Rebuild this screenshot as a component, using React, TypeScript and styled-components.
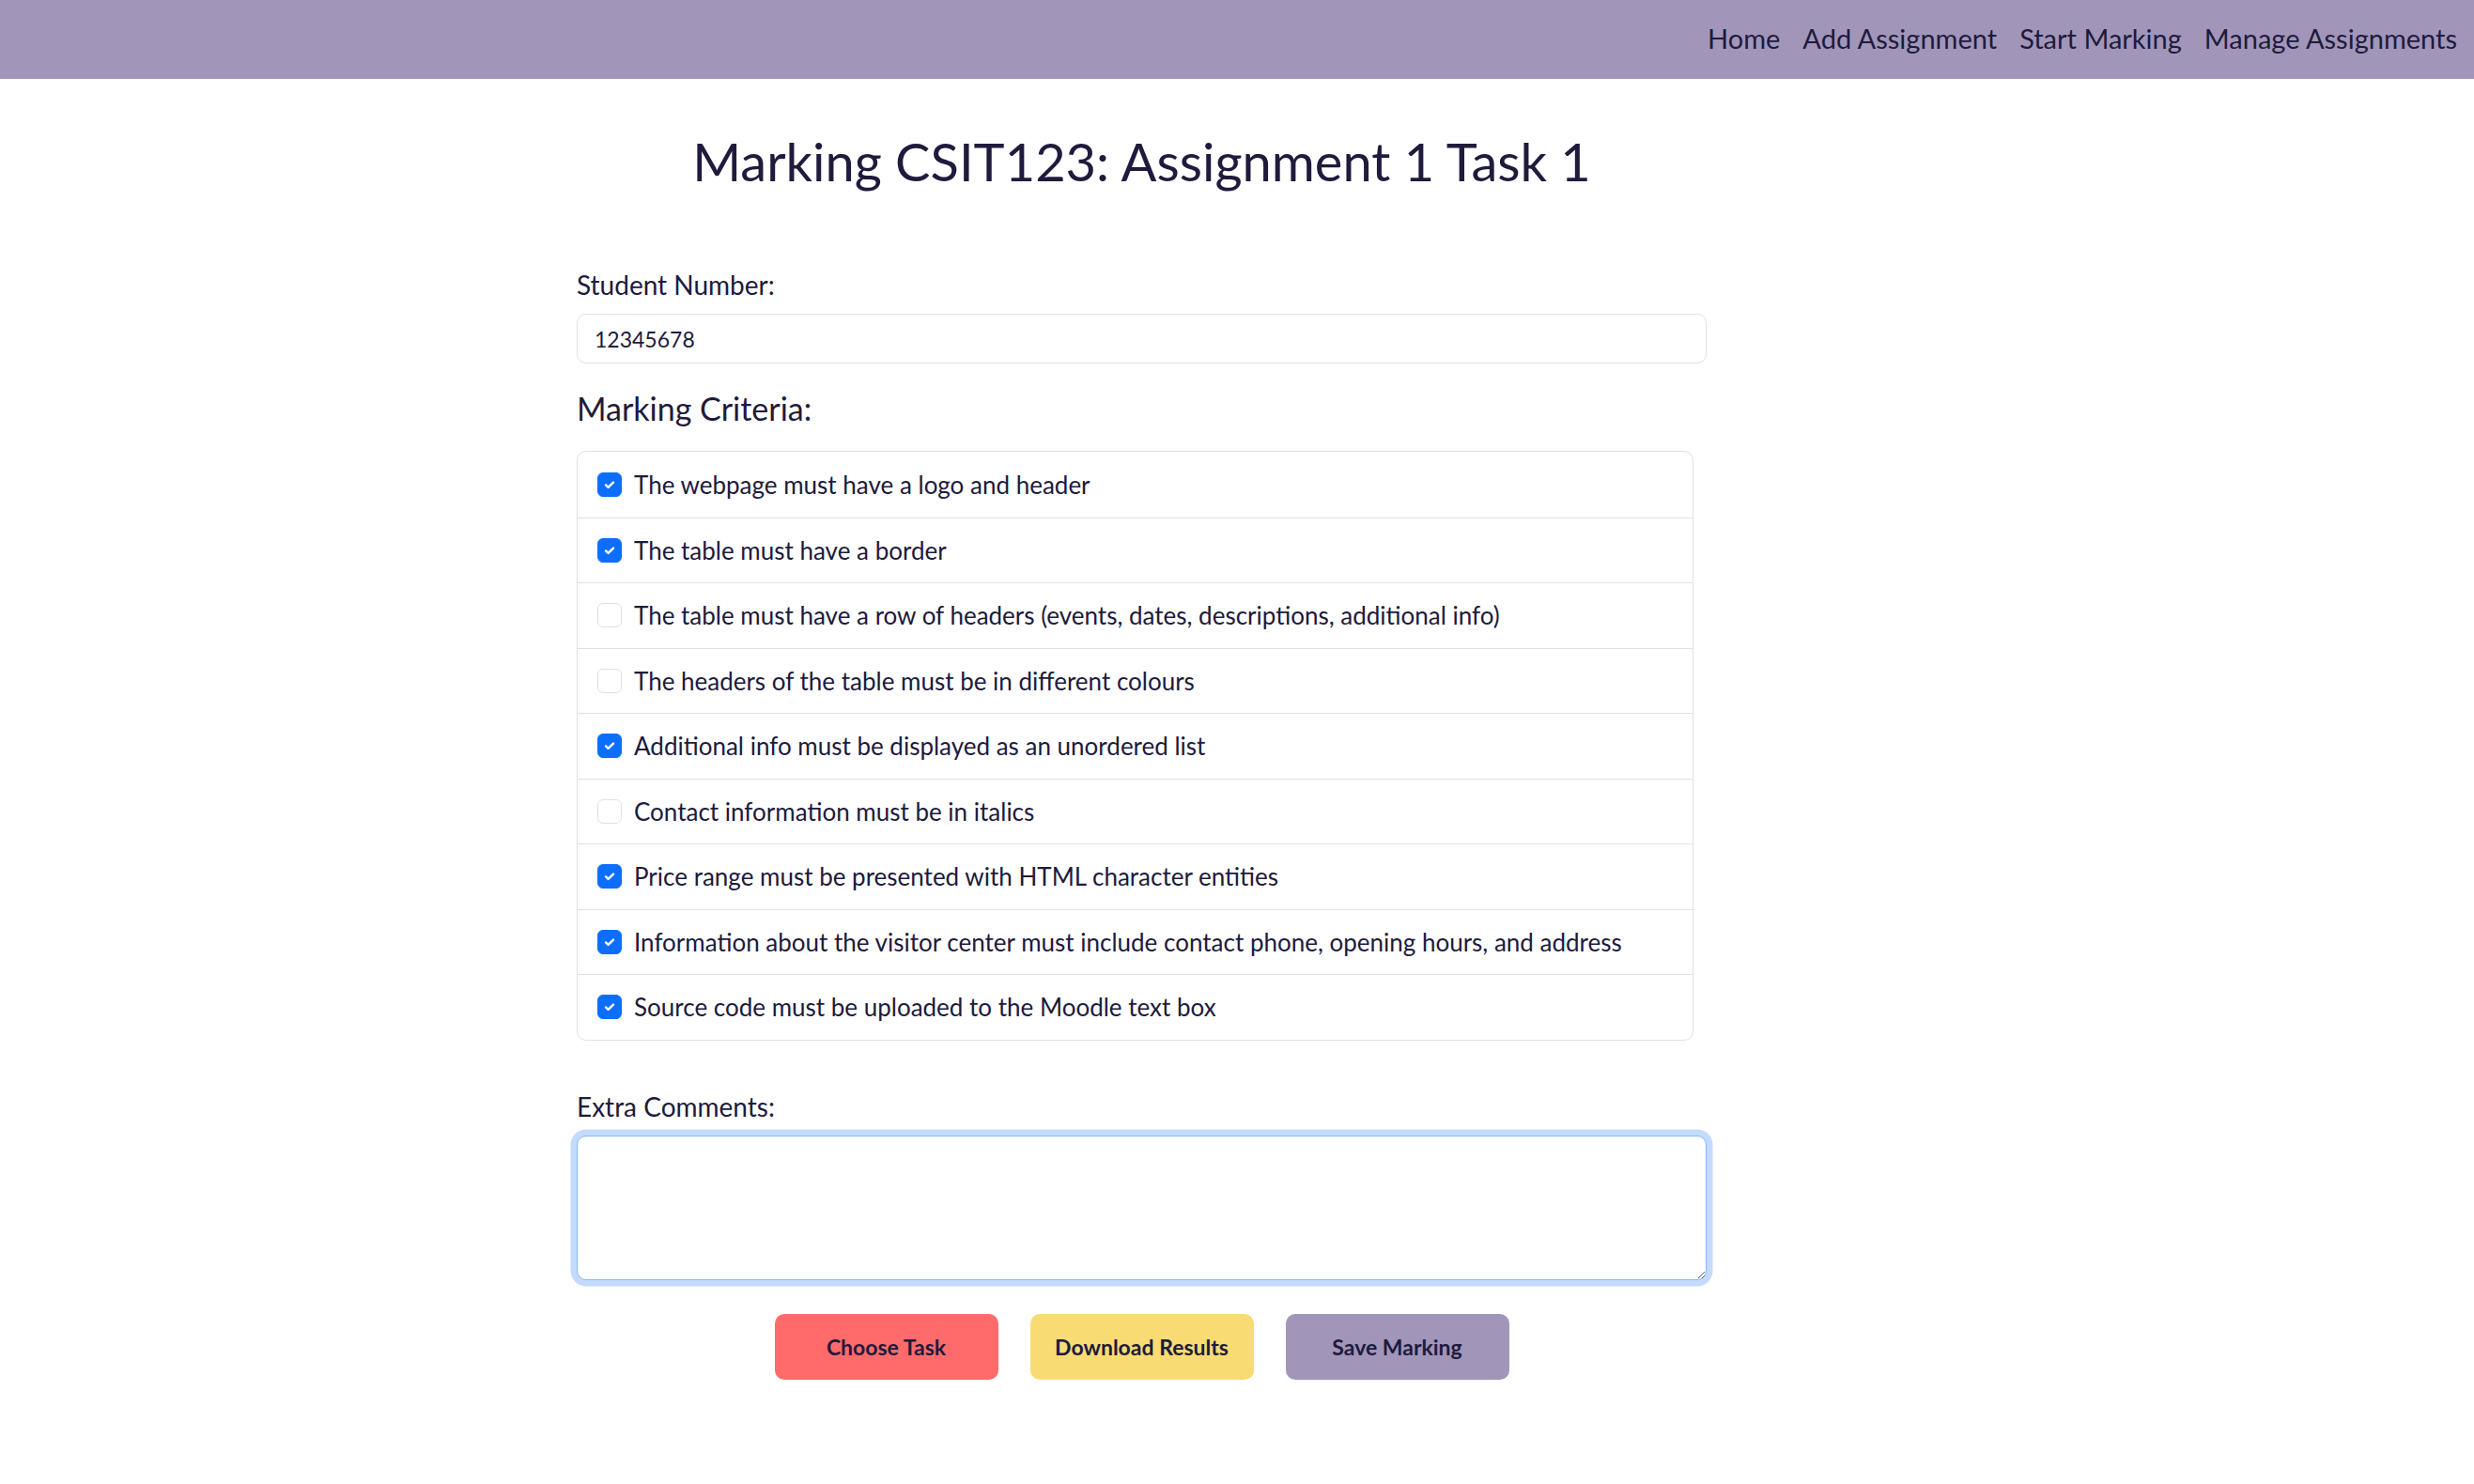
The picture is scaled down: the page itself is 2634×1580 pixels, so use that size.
import styled, { createGlobalStyle } from 'styled-components';
import { useState } from 'react';

const ink = '#201a3c';
const purple = '#a196b9';

const GlobalStyle = createGlobalStyle`
  html, body {
    margin: 0;
    padding: 0;
    background: #ffffff;
  }
  body {
    font-family: 'Lato', 'Inter', sans-serif;
    color: ${ink};
  }
  * {
    box-sizing: border-box;
  }
`;

const Header = styled.header`
  height: 84px;
  background: ${purple};
  display: flex;
  justify-content: flex-end;
  align-items: center;
  padding: 0 18px 4px 0;
`;

const Nav = styled.nav`
  display: flex;
  gap: 24px;
`;

const NavLink = styled.a`
  font-size: 29px;
  color: ${ink};
  text-decoration: none;
  cursor: pointer;
`;

const Main = styled.main`
  width: 2431px;
  display: flex;
  flex-direction: column;
  align-items: center;
  padding-bottom: 80px;
`;

const Title = styled.h1`
  margin: 54px 0 0;
  font-size: 56px;
  font-weight: 400;
  line-height: 1.2;
`;

const Form = styled.form`
  width: 1203px;
  margin-top: 78px;
  display: flex;
  flex-direction: column;
`;

const Label = styled.label`
  font-size: 28px;
  line-height: 40px;
  margin-bottom: 11px;
`;

const TextInput = styled.input`
  width: 100%;
  height: 53px;
  padding: 0 18px;
  font-family: inherit;
  font-size: 23px;
  color: ${ink};
  border: 1.5px solid #dee2e6;
  border-radius: 10px;
  outline: none;
`;

const SectionTitle = styled.h5`
  margin: 28px 0 25px;
  font-size: 34px;
  font-weight: 400;
  line-height: 40px;
`;

const List = styled.ul`
  width: 1189px;
  list-style: none;
  margin: 0;
  padding: 0;
  border: 1.5px solid #dee2e6;
  border-radius: 10px;
`;

const Item = styled.li`
  display: flex;
  align-items: center;
  gap: 13px;
  height: 69.5px;
  padding: 0 21px;
  font-size: 26px;
  & + & {
    border-top: 1.5px solid #dee2e6;
  }
`;

const Box = styled.span<{ $on: boolean }>`
  width: 26px;
  height: 26px;
  flex: none;
  display: flex;
  align-items: center;
  justify-content: center;
  border-radius: 6px;
  background: ${(p) => (p.$on ? '#0d6efd' : '#ffffff')};
  border: 1.5px solid ${(p) => (p.$on ? '#0d6efd' : '#dee2e6')};
  cursor: pointer;
`;

const CommentsLabel = styled(Label)`
  margin-top: 50px;
  margin-bottom: 11px;
`;

const TextArea = styled.textarea`
  width: 100%;
  height: 154px;
  padding: 10px 18px;
  font-family: inherit;
  font-size: 23px;
  color: ${ink};
  caret-color: ${ink};
  border: 1.5px solid #86b7fe;
  border-radius: 10px;
  box-shadow: 0 0 0 6.5px rgba(13, 110, 253, 0.25);
  outline: none;
`;

const Buttons = styled.div`
  display: flex;
  justify-content: center;
  gap: 34px;
  margin-top: 36px;
`;

const Button = styled.button<{ $bg: string }>`
  width: 238px;
  height: 70px;
  border: none;
  border-radius: 10px;
  background: ${(p) => p.$bg};
  color: ${ink};
  font-family: inherit;
  font-size: 23px;
  font-weight: 700;
  cursor: pointer;
`;

const criteria = [
  'The webpage must have a logo and header',
  'The table must have a border',
  'The table must have a row of headers (events, dates, descriptions, additional info)',
  'The headers of the table must be in different colours',
  'Additional info must be displayed as an unordered list',
  'Contact information must be in italics',
  'Price range must be presented with HTML character entities',
  'Information about the visitor center must include contact phone, opening hours, and address',
  'Source code must be uploaded to the Moodle text box',
];

export default function App() {
  const [checked, setChecked] = useState([true, true, false, false, true, false, true, true, true]);
  const [student, setStudent] = useState('12345678');
  const [comments, setComments] = useState('');

  function toggle(i: number) {
    setChecked((prev) => prev.map((v, j) => (j === i ? !v : v)));
  }

  return (
    <>
      <GlobalStyle />
      <Header>
        <Nav>
          <NavLink>Home</NavLink>
          <NavLink>Add Assignment</NavLink>
          <NavLink>Start Marking</NavLink>
          <NavLink>Manage Assignments</NavLink>
        </Nav>
      </Header>
      <Main>
        <Title>Marking CSIT123: Assignment 1 Task 1</Title>
        <Form onSubmit={(e) => e.preventDefault()}>
          <Label htmlFor='student'>Student Number:</Label>
          <TextInput id='student' value={student} onChange={(e) => setStudent(e.target.value)} />
          <SectionTitle>Marking Criteria:</SectionTitle>
          <List>
            {criteria.map((c, i) => (
              <Item key={c} onClick={() => toggle(i)}>
                <Box $on={checked[i]}>
                  {checked[i] && (
                    <svg width='16' height='16' viewBox='0 0 20 20'>
                      <path d='M5 10.5l3.2 3.2L15 7' fill='none' stroke='#fff' strokeWidth='3' strokeLinecap='round' strokeLinejoin='round' />
                    </svg>
                  )}
                </Box>
                {c}
              </Item>
            ))}
          </List>
          <CommentsLabel htmlFor='comments'>Extra Comments:</CommentsLabel>
          <TextArea id='comments' autoFocus value={comments} onChange={(e) => setComments(e.target.value)} />
          <Buttons>
            <Button type='button' $bg='#ff6b6b'>Choose Task</Button>
            <Button type='button' $bg='#f9db74'>Download Results</Button>
            <Button type='submit' $bg={purple}>Save Marking</Button>
          </Buttons>
        </Form>
      </Main>
    </>
  );
}
